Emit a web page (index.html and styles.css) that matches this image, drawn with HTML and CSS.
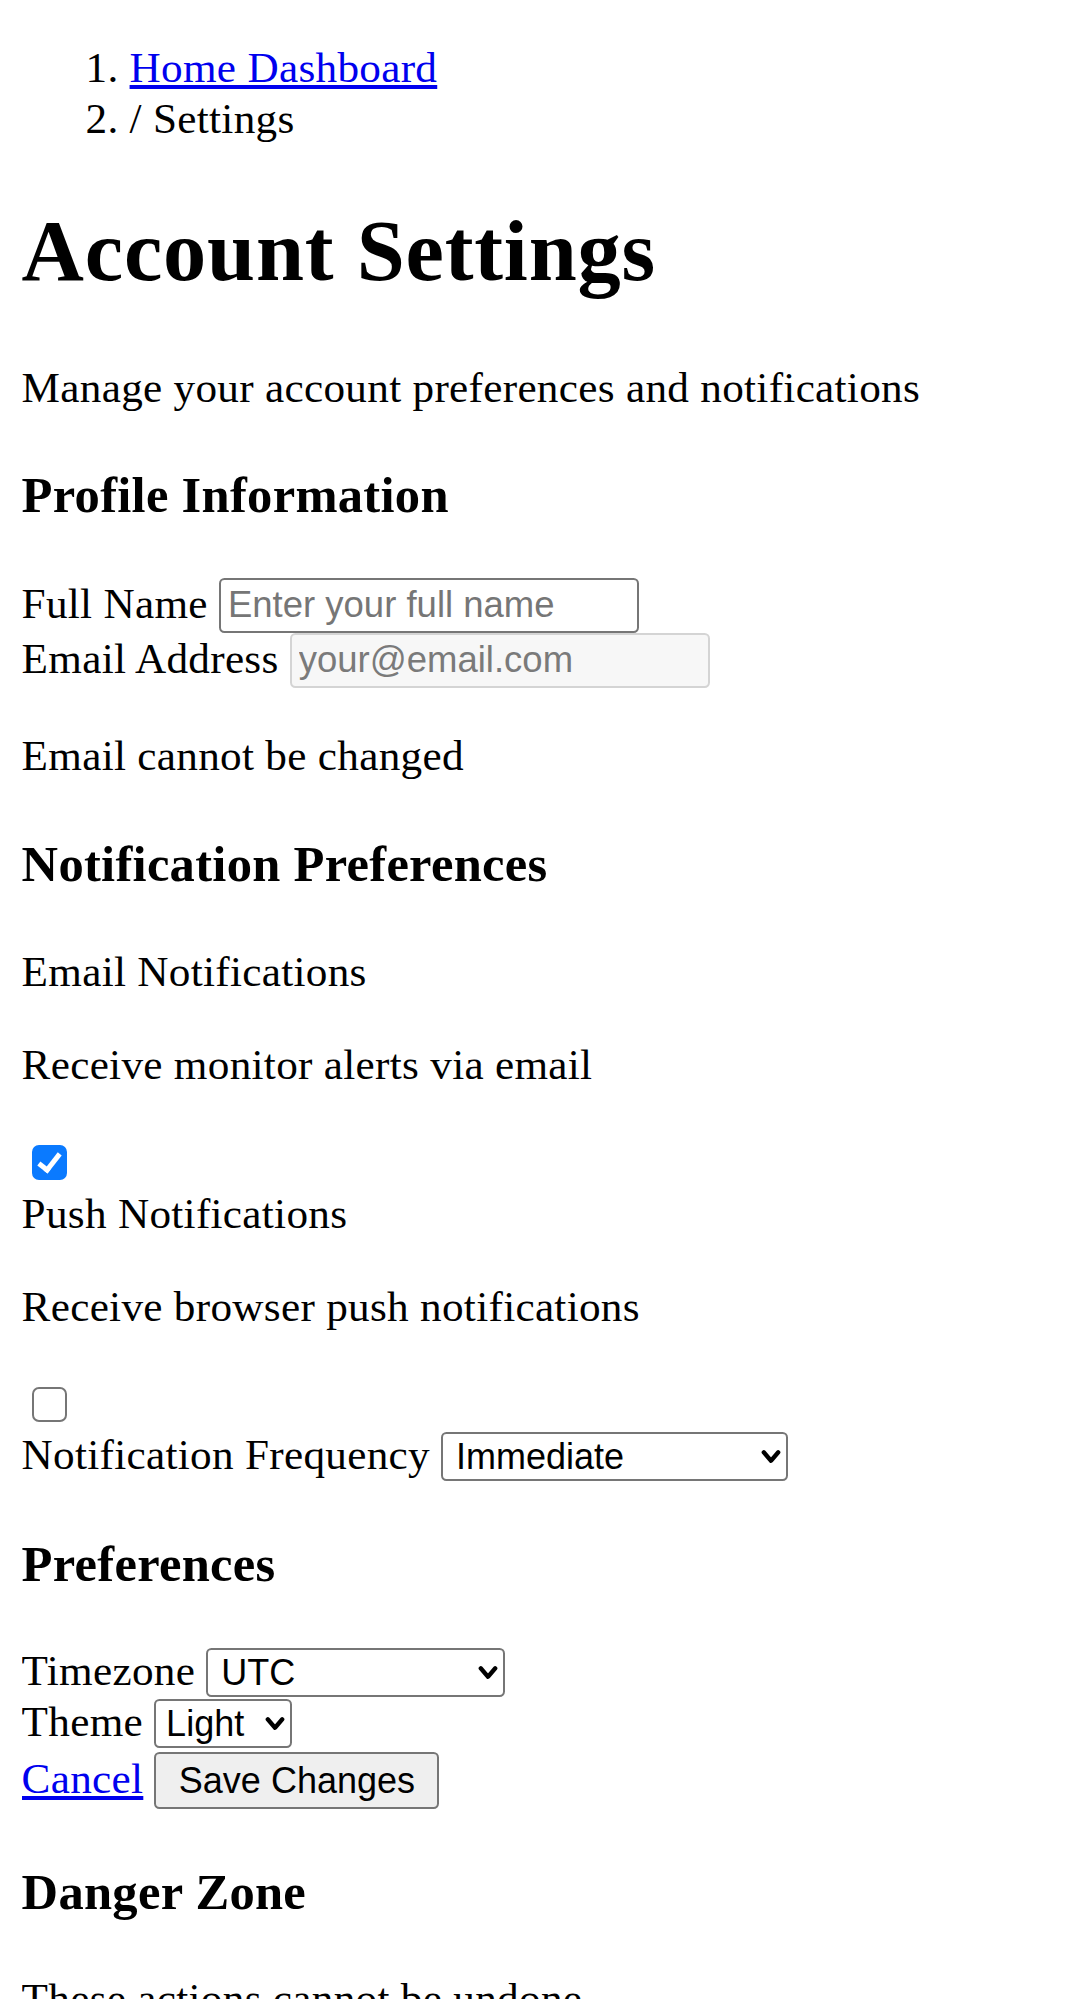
FILE: index.html
```html
<!DOCTYPE html>
<html lang="en">
<head>
<meta charset="utf-8">
<title>Account Settings</title>
<link rel="stylesheet" href="styles.css">
</head>
<body>
<nav class="crumbs">
  <ol>
    <li><a href="#">Home Dashboard</a></li>
    <li>/ Settings</li>
  </ol>
</nav>
<h1>Account Settings</h1>
<p class="lead">Manage your account preferences and notifications</p>

<section>
  <h3>Profile Information</h3>
  <div><label>Full Name</label> <input class="field" type="text" placeholder="Enter your full name"></div>
  <div><label>Email Address</label> <input class="field field-email" type="email" placeholder="your@email.com" disabled>
    <p>Email cannot be changed</p>
  </div>
</section>

<section>
  <h3>Notification Preferences</h3>
  <div>
    <div><label>Email Notifications</label><p>Receive monitor alerts via email</p></div>
    <label class="check-row"><input class="check" type="checkbox" checked></label>
  </div>
  <div>
    <div><label>Push Notifications</label><p>Receive browser push notifications</p></div>
    <label class="check-row"><input class="check" type="checkbox"></label>
  </div>
  <div><label>Notification Frequency</label> <span class="sel sel-freq"><select><option>Immediate</option><option>Hourly</option><option>Daily</option></select><svg class="chev" viewBox="0 0 16 12"><path d="M2.2 2.6l5.8 6.8 5.8-6.8"/></svg></span></div>
</section>

<section>
  <h3>Preferences</h3>
  <div><label>Timezone</label> <span class="sel sel-tz"><select><option>UTC</option></select><svg class="chev" viewBox="0 0 16 12"><path d="M2.2 2.6l5.8 6.8 5.8-6.8"/></svg></span></div>
  <div><label>Theme</label> <span class="sel sel-theme"><select><option>Light</option><option>Dark</option></select><svg class="chev" viewBox="0 0 16 12"><path d="M2.2 2.6l5.8 6.8 5.8-6.8"/></svg></span></div>
</section>

<div class="actions"><a href="#">Cancel</a> <button class="btn" type="button">Save Changes</button></div>

<section>
  <h3>Danger Zone</h3>
  <p>These actions cannot be undone</p>
</section>
</body>
</html>
```

FILE: styles.css
```css
html { background: #fff; }
body {
  margin: 0 21.6px 21.6px;
  font-family: "Liberation Serif", "Times New Roman", serif;
  font-size: 43.2px;
  line-height: 50.4px;
  letter-spacing: 0.3px;
  color: #000;
}
a { color: #0000ee; }
.crumbs ol { margin: 1em 0; padding-left: 108px; }
h1 { font-size: 2em; line-height: 99.3px; margin: 0.67em 0; letter-spacing: 0.8px; }
h3 { font-size: 1.17em; line-height: 64px; margin: 1em 0; letter-spacing: 0.3px; }
p { margin: 1em 0; }
.lead { margin-top: 1.42em; }

.field {
  box-sizing: border-box;
  width: 420px;
  height: 55px;
  margin: 0;
  padding: 0 7px;
  border: 2.7px solid #767676;
  border-radius: 5.4px;
  font-family: "Liberation Sans", Arial, sans-serif;
  font-size: 36.5px;
  line-height: normal;
  letter-spacing: 0;
  color: #000;
  background: #fff;
  vertical-align: baseline;
}
.field::placeholder { color: #767676; }
.field-email {
  background: #f7f7f7;
  border-color: #d4d4d4;
}
.field-email::placeholder { color: #7a7a7a; }

.check-row { display: block; }
.check {
  appearance: none;
  -webkit-appearance: none;
  box-sizing: border-box;
  width: 35px;
  height: 35px;
  margin: 8.1px 8.1px 8.1px 10.8px;
  border: 2.7px solid #767676;
  border-radius: 7px;
  background: #fff;
  position: relative;
  vertical-align: middle;
}
.check:checked {
  background: #0a7aff;
  border-color: #0a7aff;
}
.check:checked::after {
  content: "";
  position: absolute;
  left: 9px;
  top: 2px;
  width: 8px;
  height: 18px;
  border-right: 5px solid #fff;
  border-bottom: 5px solid #fff;
  transform: rotate(38deg);
}

.sel { position: relative; display: inline-block; letter-spacing: 0; line-height: normal; }
.sel select {
  appearance: none;
  -webkit-appearance: none;
  box-sizing: border-box;
  height: 49px;
  padding: 0 40px 0 13px;
  border: 2.7px solid #767676;
  border-radius: 5.4px;
  background: #fff;
  font-family: "Liberation Sans", Arial, sans-serif;
  font-size: 36px;
  line-height: normal;
  color: #000;
}
.sel-freq select { width: 347px; }
.sel-tz select { width: 299px; }
.sel-theme select { width: 138px; padding-left: 10px; padding-right: 30px; }
.chev {
  position: absolute;
  right: 7px;
  top: 50%;
  width: 20px;
  height: 15px;
  margin-top: -7px;
  pointer-events: none;
}
.chev path { fill: none; stroke: #000; stroke-width: 3.4; stroke-linecap: round; stroke-linejoin: round; }

.btn {
  box-sizing: border-box;
  width: 285px;
  height: 57px;
  margin: 4px 0 0;
  border: 2.7px solid #767676;
  border-radius: 5.4px;
  background: #efefef;
  font-family: "Liberation Sans", Arial, sans-serif;
  font-size: 36px;
  line-height: normal;
  letter-spacing: 0;
  color: #000;
  padding: 0;
}
```
